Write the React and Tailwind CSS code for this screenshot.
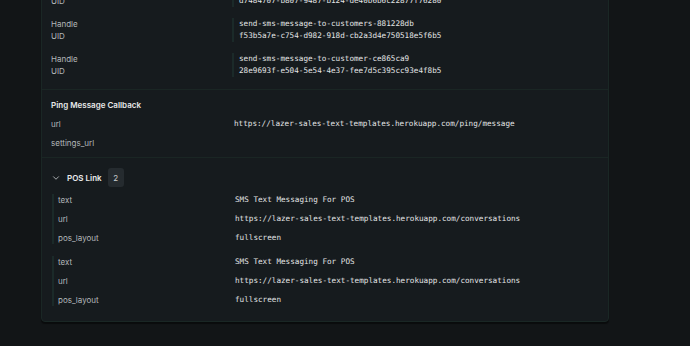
import { ChevronDown } from "lucide-react";

const sans = { fontFamily: "Inter, 'Noto Sans', sans-serif" };

const handles = [
  ["send-sms-message-to-customer-a1f09b2c", "d7484707-b807-9487-b124-de40b6b6c22877f76280"],
  ["send-sms-message-to-customers-881228db", "f53b5a7e-c754-d982-918d-cb2a3d4e750518e5f6b5"],
  ["send-sms-message-to-customer-ce865ca9", "28e9693f-e504-5e54-4e37-fee7d5c395cc93e4f8b5"],
];

const posLinks = [
  { text: "SMS Text Messaging For POS", url: "https://lazer-sales-text-templates.herokuapp.com/conversations", pos_layout: "fullscreen" },
  { text: "SMS Text Messaging For POS", url: "https://lazer-sales-text-templates.herokuapp.com/conversations", pos_layout: "fullscreen" },
];

function Mono({ children }) {
  return (
    <span className="font-['DejaVu_Sans_Mono',monospace] text-[7.65px] text-[#e2e4e5]">{children}</span>
  );
}

export default function App() {
  return (
    <div
      className="h-[346px] w-[690px] overflow-hidden bg-[#121517] flex flex-col justify-end pb-[24px] pl-[41px]"
      style={sans}
    >
      <div className="w-[568px] rounded-b-[4px] border border-[#1a2725] bg-[#161b1e] shadow-[0_2px_1px_rgba(0,0,0,0.45)]">
        {/* Handles */}
        <div className="px-[9px] pb-[12px] flex flex-col gap-[11px]">
          <div className="text-[8px] font-semibold text-[#e8eaeb] leading-[12px]">Flow Action</div>
          {handles.map(([h, uid]) => (
            <div key={uid} className="grid grid-cols-[181px_1fr]">
              <div className="flex flex-col text-[8px] text-[#b3b8ba] leading-[12px]">
                <span>Handle</span>
                <span>UID</span>
              </div>
              <div className="flex flex-col border-l-[2px] border-[#1b2a29] pl-[5px] leading-[12px]">
                <Mono>{h}</Mono>
                <Mono>{uid}</Mono>
              </div>
            </div>
          ))}
        </div>

        {/* Ping Message Callback */}
        <div className="border-t border-[#1a2624] px-[9px] pt-[9px] pb-[8px] flex flex-col gap-[7px] leading-[12px]">
          <div className="text-[8px] font-semibold text-[#e8eaeb]">Ping Message Callback</div>
          <div className="grid grid-cols-[183px_1fr]">
            <span className="text-[8px] text-[#b3b8ba]">url</span>
            <Mono>https://lazer-sales-text-templates.herokuapp.com/ping/message</Mono>
          </div>
          <div className="grid grid-cols-[183px_1fr]">
            <span className="text-[8px] text-[#b3b8ba]">settings_url</span>
            <span />
          </div>
        </div>

        {/* POS Link */}
        <div className="border-t border-[#1a2624] px-[9px] pt-[10px] pb-[15px]">
          <div className="flex h-[19px] items-center">
            <ChevronDown size={10} strokeWidth={2} className="text-[#c3c7c9]" />
            <span className="ml-[6px] text-[8px] font-semibold text-[#e8eaeb]">POS Link</span>
            <span className="ml-[6px] flex h-[19px] w-[16px] items-center justify-center rounded-[3px] bg-[#252b2f] text-[8px] text-[#c9cccd]">
              2
            </span>
          </div>
          <div className="mt-[7px] flex flex-col gap-[12px]">
            {posLinks.map((p, i) => (
              <div key={i} className="ml-[1px] border-l-[2px] border-[#1b2a29] pl-[4px] flex flex-col gap-[7px] leading-[12px]">
                {["text", "url", "pos_layout"].map((k) => (
                  <div key={k} className="grid grid-cols-[177px_1fr]">
                    <span className="text-[8px] text-[#b3b8ba]">{k}</span>
                    <Mono>{p[k]}</Mono>
                  </div>
                ))}
              </div>
            ))}
          </div>
        </div>
      </div>
    </div>
  );
}
